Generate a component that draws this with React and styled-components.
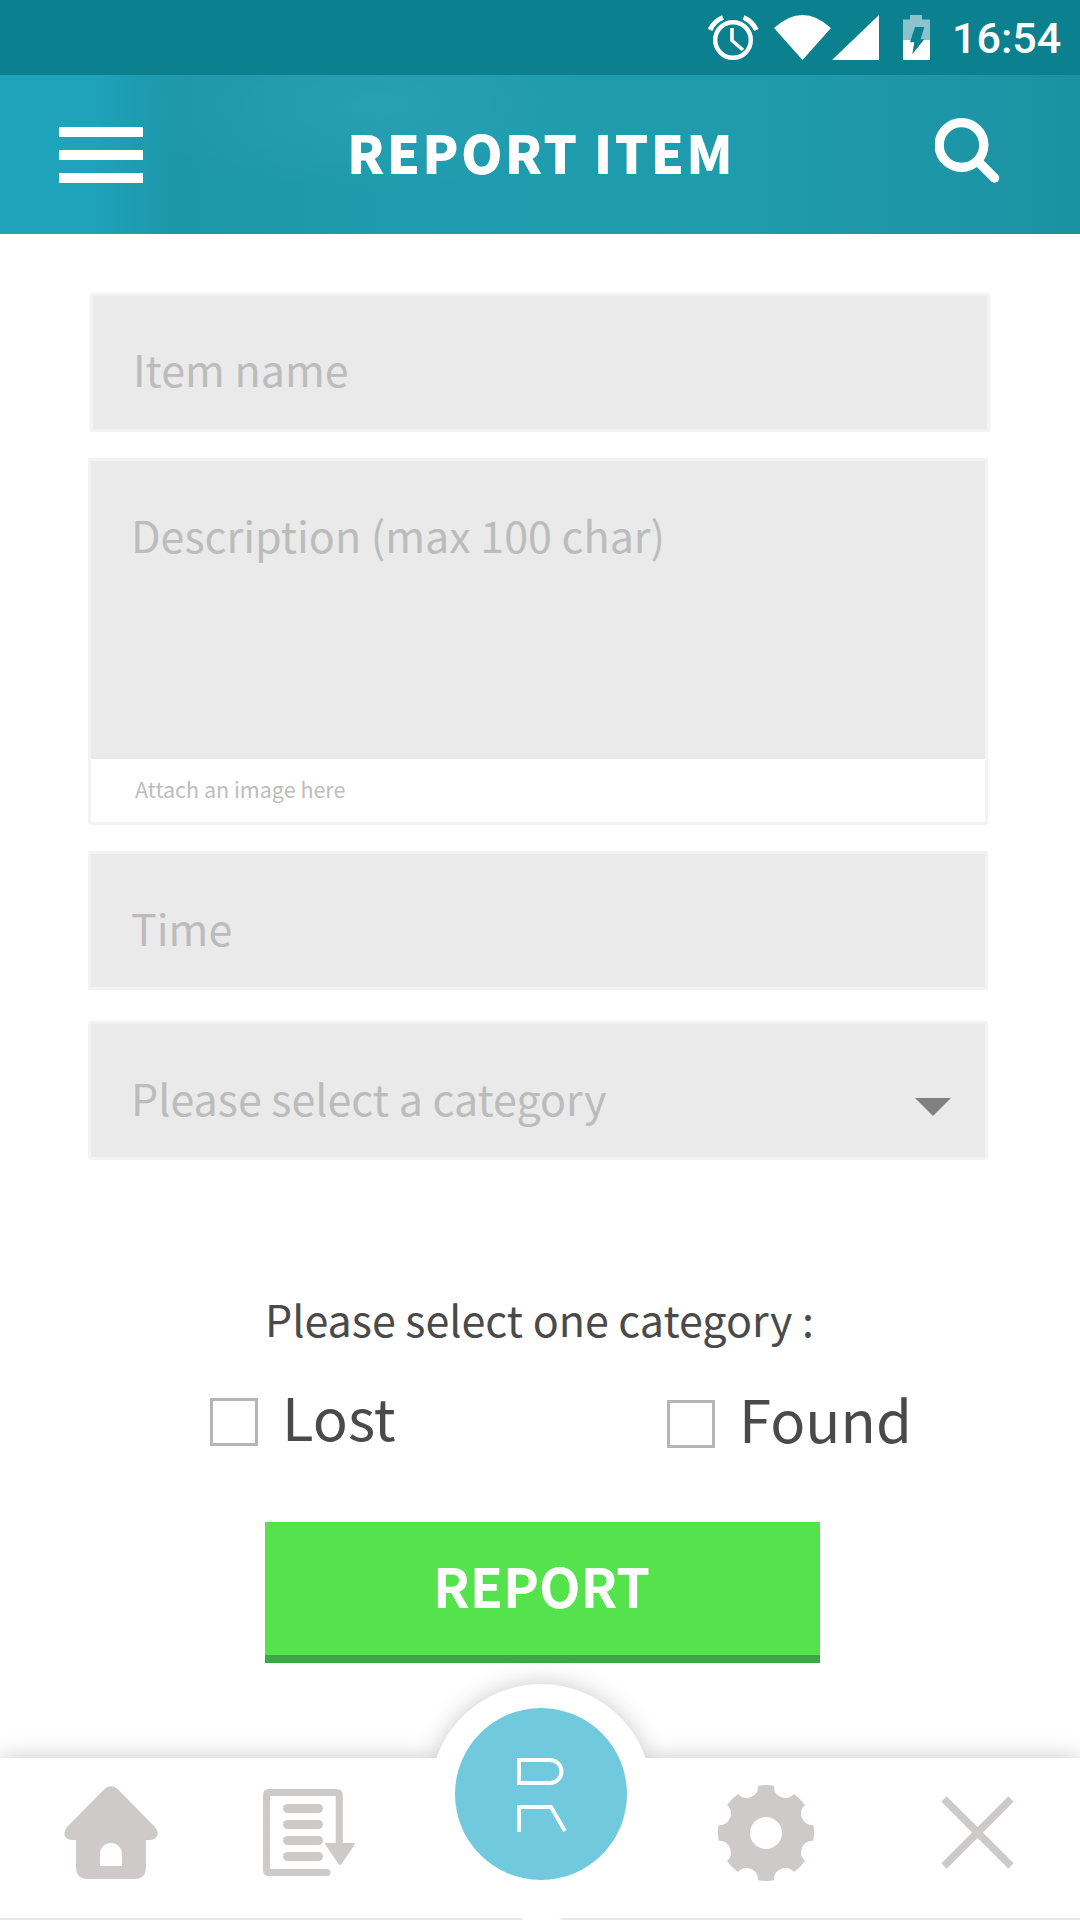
import React from "react";
import styled, { createGlobalStyle } from "styled-components";

const SANS = `"Noto Sans CJK SC", "Noto Sans", sans-serif`;
const ICON = "#cfcaca";

const Global = createGlobalStyle`
  html, body { margin: 0; padding: 0; background: #fff; }
  * { box-sizing: border-box; }
`;

const Page = styled.div`
  width: 1080px;
  height: 1920px;
  display: flex;
  flex-direction: column;
  overflow: hidden;
  background: #fff;
  font-family: ${SANS};
`;

const StatusBar = styled.div`
  height: 75px;
  flex: none;
  background: #0b808f;
  display: flex;
  align-items: flex-start;
  justify-content: flex-end;
  padding: 15px 20px 0 0;
`;
const StatusIcon = styled.svg`
  display: block;
  flex: none;
  margin-left: ${(p) => p.$ml || 0}px;
`;
const Clock = styled.span`
  font-family: Roboto, sans-serif;
  font-weight: 500;
  font-size: 43px;
  line-height: 46px;
  color: #fff;
  margin-left: 22px;
  width: 108px;
  white-space: nowrap;
`;

const Header = styled.header`
  height: 159px;
  flex: none;
  position: relative;
  display: flex;
  align-items: center;
  padding-left: 59px;
  color: #fff;
  background:
    radial-gradient(ellipse 240px 90px at 370px 30px, rgba(255, 255, 255, 0.05), transparent),
    linear-gradient(90deg, #1fa3bb 0, #1fa3bb 90px, #1c97a9 175px, #1e9bae 400px, #1f9bad 750px, #1b92a2 1080px);
`;
const MenuIcon = styled.div`
  width: 84px;
  display: flex;
  flex-direction: column;
  gap: 13px;
  flex: none;
`;
const MenuBar = styled.span`
  display: block;
  height: 10px;
  background: #fff;
`;
const Title = styled.h1`
  margin: 0 0 8px 204px;
  font-size: 53px;
  line-height: 60px;
  font-weight: 900;
  letter-spacing: 2.2px;
  white-space: nowrap;
  width: 588px;
`;
const SearchIcon = styled.svg`
  display: block;
  flex: none;
  margin-bottom: 8px;
`;

const Form = styled.main`
  flex: 1;
  min-height: 0;
  display: flex;
  flex-direction: column;
  padding: 59px 0 0 88px;
`;
const Field = styled.div`
  width: 900px;
  height: ${(p) => p.$h}px;
  margin: ${(p) => p.$mt || 0}px 0 0 ${(p) => p.$ml || 0}px;
  border: 3px solid #f3f3f3;
  border-radius: 3px;
  background: #eaeaea;
  position: relative;
  flex: none;
  display: flex;
  flex-direction: column;
`;
const Placeholder = styled.div`
  font-size: 43px;
  line-height: 43px;
  color: #bcbcbc;
  padding: ${(p) => p.$pt}px 0 0 ${(p) => p.$pl}px;
  white-space: nowrap;
`;
const DescriptionField = styled(Field)`
  background: #fff;
`;
const DescriptionArea = styled.div`
  height: 298px;
  flex: none;
  background: #eaeaea;
`;
const AttachNote = styled.div`
  font-size: 21.5px;
  line-height: 24px;
  color: #bdbdbd;
  padding: 18px 0 0 44px;
  white-space: nowrap;
`;
const Caret = styled.span`
  position: absolute;
  right: 34px;
  top: 74px;
  width: 0;
  height: 0;
  border-left: 18px solid transparent;
  border-right: 18px solid transparent;
  border-top: 18px solid #808080;
`;

const Prompt = styled.div`
  margin: 137px 0 0 177px;
  font-size: 43px;
  line-height: 43px;
  color: #4a4a4a;
  white-space: nowrap;
`;
const Choices = styled.div`
  display: flex;
  margin: 58px 0 0 122px;
  height: 50px;
`;
const Choice = styled.label`
  display: flex;
  align-items: flex-start;
  width: ${(p) => p.$w}px;
  padding-top: ${(p) => p.$pt || 0}px;
`;
const Box = styled.span`
  display: block;
  width: 48px;
  height: 48px;
  flex: none;
  border: 3px solid #b5b5b5;
  background: #fff;
`;
const ChoiceLabel = styled.span`
  font-size: 58px;
  line-height: 58px;
  color: #4a4a4a;
  margin: -11px 0 0 24px;
  white-space: nowrap;
`;
const SubmitButton = styled.button`
  display: block;
  width: 555px;
  height: 141px;
  margin: 74px 0 0 177px;
  padding: 0 2px 8px 0;
  border: 0;
  border-bottom: 8px solid #3aa845;
  background: #54e34d;
  color: #fff;
  font-family: ${SANS};
  font-weight: 700;
  font-size: 54px;
  line-height: 60px;
  flex: none;
`;

const Dock = styled.div`
  position: relative;
  flex: none;
  height: 162px;
`;
const DockShadow = styled.div`
  position: absolute;
  inset: 0;
  filter: drop-shadow(0 -1px 11px rgba(0, 0, 0, 0.2));
`;
const BarShape = styled.div`
  position: absolute;
  inset: 0;
  background: #fff;
`;
const Hump = styled.div`
  position: absolute;
  left: 430px;
  top: -74px;
  width: 222px;
  height: 222px;
  border-radius: 50%;
  background: #fff;
`;
const NavBar = styled.nav`
  position: relative;
  height: 160px;
  display: flex;
  align-items: center;
  padding: 0 0 11px 64px;
`;
const NavIcon = styled.svg`
  display: block;
  flex: none;
  margin-left: ${(p) => p.$ml || 0}px;
`;
const Fab = styled.div`
  position: absolute;
  left: 455px;
  top: -50px;
  width: 172px;
  height: 172px;
  border-radius: 50%;
  background: #71c9de;
`;
const FabLogo = styled.svg`
  display: block;
`;
const BottomEdge = styled.div`
  position: absolute;
  left: 0;
  right: 0;
  bottom: 0;
  height: 2px;
  background: linear-gradient(90deg, #e8e8e8 0, #e8e8e8 520px, #fff 525px, #fff 558px, #e8e8e8 563px);
`;

function gearPath() {
  const c = 48;
  const r = 48;
  const half = 9.4;
  const pt = (deg, rad) => {
    const a = ((deg - 90) * Math.PI) / 180;
    return `${(c + rad * Math.cos(a)).toFixed(2)} ${(c + rad * Math.sin(a)).toFixed(2)}`;
  };
  let d = `M${pt(-half, r)}`;
  for (let k = 0; k < 8; k++) {
    const m = k * 45;
    d += ` A${r} ${r} 0 0 1 ${pt(m + half, r)}`;
    d += ` A11.5 11.5 0 0 0 ${pt(m + 45 - half, r)}`;
  }
  return `${d} Z M64 48 A16 16 0 1 0 32 48 A16 16 0 1 0 64 48 Z`;
}

export default function App() {
  return (
    <Page>
      <Global />
      <StatusBar>
        <StatusIcon width="51" height="45" viewBox="0 0 51 45" fill="none" stroke="#fff">
          <circle cx="25" cy="25" r="17.8" strokeWidth="4.4" />
          <path d="M24 13V25.5L35 35" strokeWidth="3.6" />
          <path d="M2 15Q6 6 15 2.5M48.5 15Q44 6 35.5 2.5" strokeWidth="5" />
        </StatusIcon>
        <StatusIcon $ml={15} width="57" height="45" viewBox="0 0 57 45" fill="#fff">
          <path d="M28.5 45L0 13Q28.5 -13 57 13Z" />
        </StatusIcon>
        <StatusIcon width="48" height="45" viewBox="0 0 48 45" fill="#fff">
          <path d="M1 45L48 0V45Z" />
        </StatusIcon>
        <StatusIcon $ml={24} width="27" height="45" viewBox="0 0 27 45">
          <path d="M7 0H19V4.500H27V25H0V4.500H7Z" fill="#8ac3cc" />
          <rect y="25" width="27" height="20" fill="#fff" />
          <path d="M12 12H21.300L17.700 24.300H21.300L9.300 39.300L11.300 27.300H7Z" fill="#0b808f" />
        </StatusIcon>
        <Clock>16:54</Clock>
      </StatusBar>
      <Header>
        <MenuIcon>
          <MenuBar />
          <MenuBar />
          <MenuBar />
        </MenuIcon>
        <Title>REPORT ITEM</Title>
        <SearchIcon width="65" height="65" viewBox="0 0 65 65" fill="none" stroke="#fff">
          <circle cx="26.500" cy="27" r="22.300" strokeWidth="9.300" />
          <path d="M44 44.500L59.500 60" strokeWidth="9.500" strokeLinecap="round" />
        </SearchIcon>
      </Header>
      <Form>
        <Field $h={139} $ml={2}>
          <Placeholder $pt={51} $pl={40}>Item name</Placeholder>
        </Field>
        <DescriptionField $h={367} $mt={26}>
          <DescriptionArea>
            <Placeholder $pt={52} $pl={40}>Description (max 100 char)</Placeholder>
          </DescriptionArea>
          <AttachNote>Attach an image here</AttachNote>
        </DescriptionField>
        <Field $h={139} $mt={26}>
          <Placeholder $pt={52} $pl={40}>Time</Placeholder>
        </Field>
        <Field $h={139} $mt={31}>
          <Placeholder $pt={52} $pl={40}>Please select a category</Placeholder>
          <Caret />
        </Field>
        <Prompt>Please select one category :</Prompt>
        <Choices>
          <Choice $w={457}>
            <Box />
            <ChoiceLabel>Lost</ChoiceLabel>
          </Choice>
          <Choice $w={300} $pt={2}>
            <Box />
            <ChoiceLabel>Found</ChoiceLabel>
          </Choice>
        </Choices>
        <SubmitButton>REPORT</SubmitButton>
      </Form>
      <Dock>
        <DockShadow>
          <BarShape />
          <Hump />
        </DockShadow>
        <NavBar>
          <NavIcon width="94" height="93" viewBox="0 0 94 93" fill={ICON}>
            <path
              fillRule="evenodd"
              d="M41 2.500Q47 -2 53 2.500L91 41Q95 46 93 50Q91 54 86 54H82V81Q82 93 70 93H24Q12 93 12 81V54H8Q3 54 1 50Q-1 46 3 41ZM36 80H58V68A11 11 0 0 0 36 68Z"
            />
          </NavIcon>
          <NavIcon $ml={105} width="92" height="87" viewBox="0 0 92 87" fill="none">
            <path
              d="M76.300 55V6Q76.300 3.500 73.500 3.500H6Q3.500 3.500 3.500 6V81Q3.500 83.500 6 83.500H64"
              stroke={ICON}
              strokeWidth="7"
              strokeLinecap="round"
              strokeLinejoin="round"
            />
            <g fill={ICON}>
              <rect x="20" y="15" width="40" height="9" rx="4.500" />
              <rect x="20" y="31" width="40" height="9" rx="4.500" />
              <rect x="20" y="47" width="40" height="9" rx="4.500" />
              <rect x="20" y="63" width="40" height="9" rx="4.500" />
              <path d="M63 54H91Q92.500 54 91.500 56L78.500 75Q77 77 75.500 75L62.500 56Q61.500 54 63 54Z" />
            </g>
          </NavIcon>
          <NavIcon $ml={363} width="96" height="96" viewBox="0 0 96 96" fill={ICON}>
            <path fillRule="evenodd" d={gearPath()} />
          </NavIcon>
          <NavIcon $ml={127} width="73" height="73" viewBox="0 0 73 73" fill="none" stroke={ICON} strokeWidth="7.500">
            <path d="M3 3L70 70M70 3L3 70" />
          </NavIcon>
        </NavBar>
        <Fab>
          <FabLogo width="172" height="172" viewBox="0 0 172 172" fill="none" stroke="#fff" strokeWidth="4">
            <path d="M64 52H95A11.500 11.500 0 0 1 95 75H64Z" />
            <path d="M64 124V99H96L110 123" />
          </FabLogo>
        </Fab>
        <BottomEdge />
      </Dock>
    </Page>
  );
}
